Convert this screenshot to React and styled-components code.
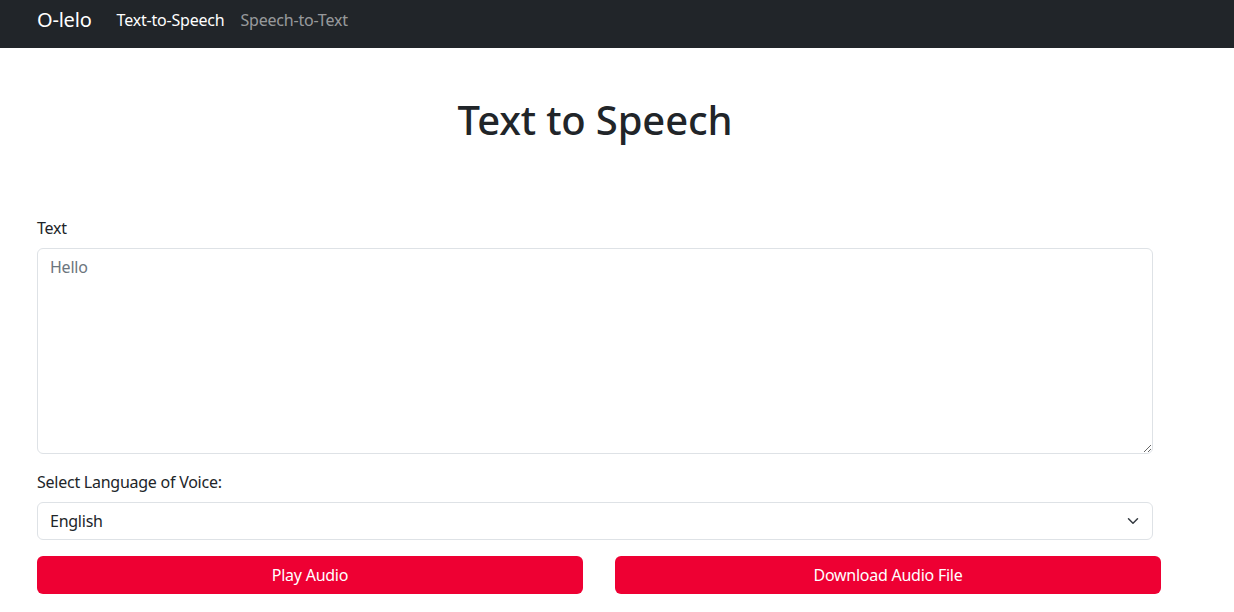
import React from "react";
import styled, { createGlobalStyle } from "styled-components";

const Global = createGlobalStyle`
  html, body { margin: 0; padding: 0; background: #fff; }
  body {
    font-family: "Noto Sans", "Liberation Sans", sans-serif;
    font-size: 16px;
    line-height: 1.5;
    color: #212529;
  }
  * { box-sizing: border-box; }
`;

const Nav = styled.nav`
  height: 48px;
  background: #212529;
  display: flex;
  align-items: center;
  padding: 0 37px 8px;
`;

const Brand = styled.a`
  color: #fff;
  font-size: 20px;
  margin-right: 25px;
  text-decoration: none;
  letter-spacing: -0.2px;
`;

const NavLinks = styled.div`
  display: flex;
  gap: 16px;
`;

const NavLink = styled.a`
  color: ${(p) => (p.$active ? "#fff" : "rgba(255,255,255,0.55)")};
  font-size: 16px;
  text-decoration: none;
  letter-spacing: -0.2px;
`;

const Main = styled.main`
  padding: 0 37px;
  display: flex;
  flex-direction: column;
`;

const Title = styled.h1`
  margin: 48px 0 72px;
  width: 1116px;
  text-align: center;
  font-size: 40px;
  font-weight: 500;
  line-height: 48px;
  letter-spacing: -0.15px;
`;

const Field = styled.div`
  width: 1116px;
  display: flex;
  flex-direction: column;
  margin-bottom: 16px;
`;

const Label = styled.label`
  font-size: 16px;
  line-height: 24px;
  margin-bottom: 8px;
  letter-spacing: -0.25px;
`;

const TextArea = styled.textarea`
  height: 206px;
  width: 100%;
  border: 1px solid #dee2e6;
  border-radius: 6px;
  padding: 6px 12px;
  font-family: inherit;
  font-size: 16px;
  letter-spacing: -0.25px;
  line-height: 24px;
  color: #212529;
  resize: vertical;
  outline: none;
  &::placeholder { color: #6c757d; }
`;

const SelectWrap = styled.div`
  position: relative;
`;

const Select = styled.select`
  appearance: none;
  width: 100%;
  height: 38px;
  border: 1px solid #dee2e6;
  border-radius: 6px;
  padding: 6px 36px 6px 12px;
  font-family: inherit;
  font-size: 16px;
  letter-spacing: -0.25px;
  color: #212529;
  background: #fff;
  outline: none;
`;

const Chevron = styled.svg`
  position: absolute;
  right: 12px;
  top: 13px;
  width: 16px;
  height: 12px;
  pointer-events: none;
`;

const Buttons = styled.div`
  width: 1124px;
  display: grid;
  grid-template-columns: 546px 546px;
  gap: 32px;
`;

const Button = styled.button`
  height: 38px;
  border: none;
  border-radius: 6px;
  background: #ee0033;
  color: #fff;
  font-family: inherit;
  font-size: 16px;
  letter-spacing: -0.25px;
  cursor: pointer;
`;

export default function App() {
  return (
    <>
      <Global />
      <Nav>
        <Brand href="#">O-lelo</Brand>
        <NavLinks>
          <NavLink $active href="#">Text-to-Speech</NavLink>
          <NavLink href="#">Speech-to-Text</NavLink>
        </NavLinks>
      </Nav>
      <Main>
        <Title>Text to Speech</Title>
        <Field>
          <Label htmlFor="text">Text</Label>
          <TextArea id="text" placeholder="Hello" />
        </Field>
        <Field>
          <Label htmlFor="lang">Select Language of Voice:</Label>
          <SelectWrap>
            <Select id="lang" defaultValue="en">
              <option value="en">English</option>
            </Select>
            <Chevron viewBox="0 0 16 16">
              <path d="m2 5 6 6 6-6" fill="none" stroke="#343a40" strokeWidth="2" strokeLinecap="round" strokeLinejoin="round" />
            </Chevron>
          </SelectWrap>
        </Field>
        <Buttons>
          <Button>Play Audio</Button>
          <Button>Download Audio File</Button>
        </Buttons>
      </Main>
    </>
  );
}
